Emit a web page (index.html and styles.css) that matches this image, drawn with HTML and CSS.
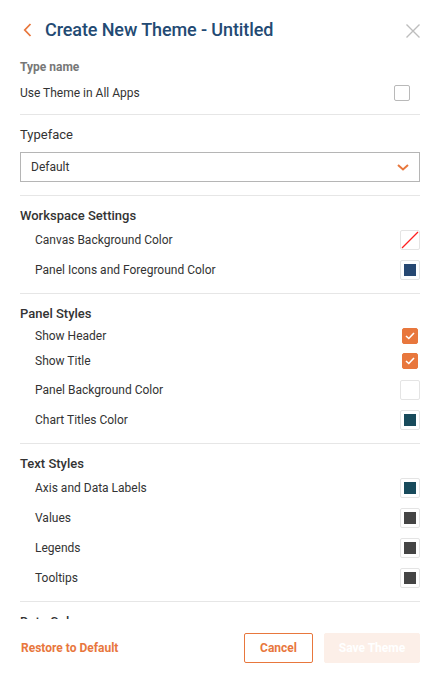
FILE: index.html
```html
<!DOCTYPE html>
<html>
<head>
<meta charset="utf-8">
<link rel="stylesheet" href="styles.css">
</head>
<body>
<div class="panel">
  <header class="head">
    <span class="back"><svg width="9" height="14" viewBox="0 0 9 14"><path d="M7.5 1 L1.8 7 L7.5 13" fill="none" stroke="#e8773d" stroke-width="1.8"/></svg></span>
    <h1 class="title">Create New Theme - Untitled</h1>
    <span class="close"><svg width="14" height="14" viewBox="0 0 14 14"><path d="M0.5 0.5 L13.5 13.5 M13.5 0.5 L0.5 13.5" stroke="#bdbdbd" stroke-width="1.4"/></svg></span>
  </header>
  <main class="scroll">
    <div class="muted-label">Type name</div>
    <div class="row top-row">
      <span>Use Theme in All Apps</span>
      <span class="check"></span>
    </div>
    <hr class="divider">
    <div class="plain-label">Typeface</div>
    <div class="select">
      <span>Default</span>
      <svg width="12" height="7" viewBox="0 0 12 7"><path d="M1 1 L6 5.5 L11 1" fill="none" stroke="#e8773d" stroke-width="2"/></svg>
    </div>
    <hr class="divider">
    <div class="section-title">Workspace Settings</div>
    <div class="row item tall"><span>Canvas Background Color</span><span class="swatch none"><svg width="18" height="18" viewBox="0 0 18 18"><path d="M1 17 L17 1" stroke="#ff2020" stroke-width="1.2"/></svg></span></div>
    <div class="row item tall"><span>Panel Icons and Foreground Color</span><span class="swatch"><i class="fill navy"></i></span></div>
    <hr class="divider">
    <div class="section-title">Panel Styles</div>
    <div class="row item short"><span>Show Header</span><span class="check on"><svg width="10" height="8" viewBox="0 0 10 8"><path d="M1 4 L3.8 6.5 L9 1" fill="none" stroke="#fff" stroke-width="1.6"/></svg></span></div>
    <div class="row item short"><span>Show Title</span><span class="check on"><svg width="10" height="8" viewBox="0 0 10 8"><path d="M1 4 L3.8 6.5 L9 1" fill="none" stroke="#fff" stroke-width="1.6"/></svg></span></div>
    <div class="row item tall gap2"><span>Panel Background Color</span><span class="swatch"></span></div>
    <div class="row item tall"><span>Chart Titles Color</span><span class="swatch"><i class="fill teal"></i></span></div>
    <hr class="divider">
    <div class="section-title">Text Styles</div>
    <div class="row item tall"><span>Axis and Data Labels</span><span class="swatch"><i class="fill teal"></i></span></div>
    <div class="row item tall"><span>Values</span><span class="swatch"><i class="fill gray"></i></span></div>
    <div class="row item tall"><span>Legends</span><span class="swatch"><i class="fill gray"></i></span></div>
    <div class="row item tall"><span>Tooltips</span><span class="swatch"><i class="fill gray"></i></span></div>
    <hr class="divider">
    <div class="section-title">Data Colors</div>
  </main>
  <footer class="foot">
    <a class="restore">Restore to Default</a>
    <div class="buttons">
      <button class="btn cancel">Cancel</button>
      <button class="btn save">Save Theme</button>
    </div>
  </footer>
</div>
</body>
</html>
```
FILE: styles.css
```css
* { box-sizing: border-box; }
html, body { margin: 0; padding: 0; background: #fff; }
body { font-family: Roboto, "Liberation Sans", Arial, sans-serif; color: #333; }

.panel {
  width: 437px;
  height: 679px;
  display: flex;
  flex-direction: column;
}

.head {
  height: 52px;
  flex: none;
  display: flex;
  align-items: flex-start;
  padding: 18px 17px 0 23px;
}
.back { width: 22px; height: 24px; display: flex; align-items: center; }
.title {
  margin: 0;
  flex: 1;
  font-size: 18px;
  line-height: 24px;
  font-weight: 500;
  color: #234a73;
  letter-spacing: -0.1px;
}
.close { height: 24px; display: flex; align-items: center; padding-top: 2px; }

.scroll {
  flex: 1;
  overflow: hidden;
  padding: 1px 17px 0 20px;
}

.muted-label {
  margin-top: 6px;
  font-size: 12px;
  line-height: 16px;
  font-weight: 700;
  color: #777;
}
.row {
  display: flex;
  align-items: center;
  justify-content: space-between;
  font-size: 12px;
}
.top-row { height: 26px; margin-top: 5px; padding-right: 10px; }
.item { padding-left: 15px; }
.tall { height: 30px; }
.short { height: 25px; padding-right: 2px; }
.gap2 { margin-top: 2px; }

.divider {
  border: 0;
  border-top: 1px solid #e6e6e6;
  margin: 8px 0 0;
  height: 0;
}
.top-row + .divider { margin-top: 8px; }

.plain-label {
  margin-top: 12px;
  font-size: 13px;
  line-height: 16px;
  color: #333;
}
.select {
  margin-top: 9px;
  height: 30px;
  border: 1px solid #b5b5b5;
  display: flex;
  align-items: center;
  justify-content: space-between;
  padding: 0 10px 0 10px;
  font-size: 12px;
}
.select svg { margin-top: 1px; }
.select + .divider { margin-top: 13px; }

.section-title {
  margin-top: 12px;
  height: 17px;
  font-size: 13px;
  line-height: 16px;
  font-weight: 500;
  color: #333;
}

.check {
  width: 16px;
  height: 16px;
  border: 1px solid #b9b9b9;
  border-radius: 2px;
  display: flex;
  align-items: center;
  justify-content: center;
}
.check.on { background: #e8773d; border-color: #e8773d; }

.swatch {
  width: 20px;
  height: 20px;
  border: 1px solid #e4e4e4;
  border-radius: 2px;
  display: flex;
  align-items: center;
  justify-content: center;
  background: #fff;
}
.swatch.none svg { display: block; }
.fill { display: block; width: 12px; height: 12px; }
.navy { background: #274872; }
.teal { background: #184a5b; }
.gray { background: #454545; }

.foot {
  flex: none;
  height: 60px;
  display: flex;
  align-items: flex-start;
  justify-content: space-between;
  padding: 14px 17px 0 21px;
}
.restore {
  font-size: 12px;
  font-weight: 700;
  color: #e8773d;
  line-height: 30px;
  cursor: pointer;
}
.buttons { display: flex; gap: 11px; }
.btn {
  height: 30px;
  font-family: inherit;
  font-size: 12px;
  font-weight: 700;
  border-radius: 2px;
  padding: 0;
  cursor: pointer;
}
.cancel {
  width: 69px;
  background: #fff;
  color: #e8773d;
  border: 1px solid #e8773d;
}
.save {
  width: 96px;
  background: #fcefe8;
  color: #fff;
  border: 1px solid #fcefe8;
}
```
